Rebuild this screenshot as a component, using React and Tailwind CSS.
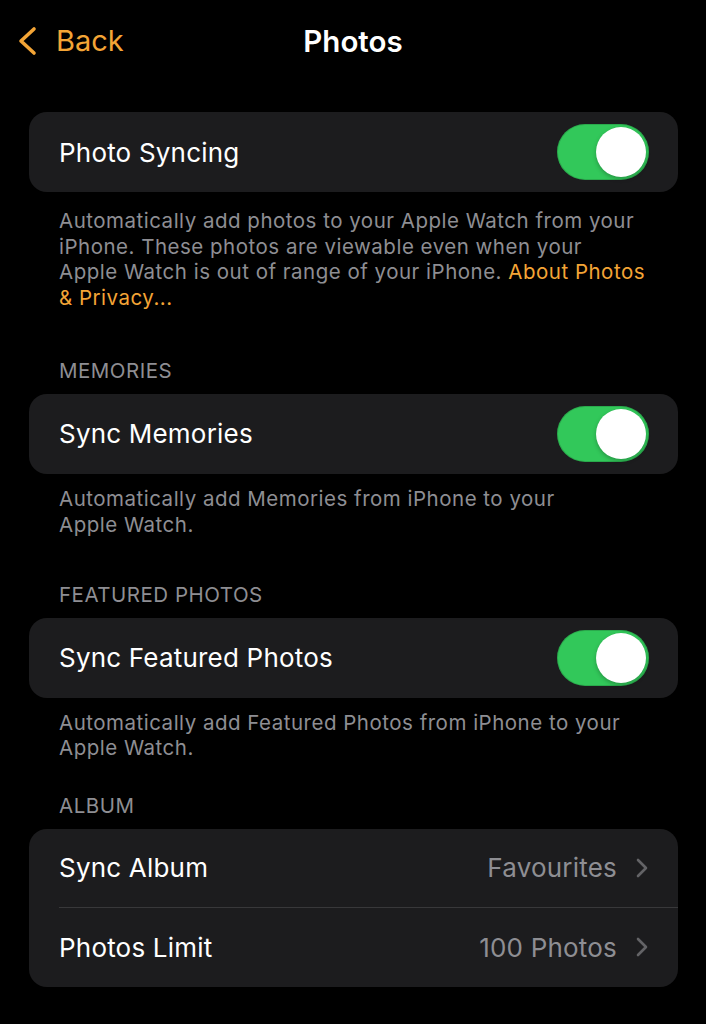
import React from "react";

const font = { fontFamily: "Inter, 'Noto Sans', sans-serif" };

function Toggle() {
  return (
    <div className="w-[92px] h-[56px] rounded-full bg-[#32c85a] flex items-center justify-end pr-[3px] shadow-[inset_0_0_0_1px_rgba(0,0,0,0.15)]">
      <div className="w-[50px] h-[50px] rounded-full bg-white shadow-[0_2px_4px_rgba(0,0,0,0.25)]" />
    </div>
  );
}

function Chevron() {
  return (
    <svg width="12" height="20" viewBox="0 0 12 20" className="ml-[19px]">
      <polyline points="2,2 10,10 2,18" fill="none" stroke="#636366" strokeWidth="2.6" strokeLinecap="round" strokeLinejoin="round" />
    </svg>
  );
}

function ToggleCard({ label }) {
  return (
    <div className="h-[80px] rounded-[18px] bg-[#1c1c1e] pl-[30px] pr-[29px] flex items-center justify-between">
      <span className="text-[26px] text-white tracking-[0.2px]">{label}</span>
      <Toggle />
    </div>
  );
}

function Desc({ children, className = "" }) {
  return (
    <div className={"px-[30px] text-[20.5px] leading-[25.6px] tracking-[0.5px] text-[#8e8e93] whitespace-nowrap " + className}>
      {children}
    </div>
  );
}

function Header({ children, className = "" }) {
  return (
    <div className={"px-[30px] text-[20.5px] leading-[25.6px] tracking-[0.5px] text-[#8e8e93] uppercase " + className}>
      {children}
    </div>
  );
}

export default function App() {
  return (
    <div className="min-h-[1024px] w-[706px] bg-black antialiased" style={font}>
      <div className="grid grid-cols-[1fr_auto_1fr] items-center pt-[21px] h-[61px] px-[17px]">
        <div className="flex items-center text-[#f4a536]">
          <svg width="20" height="30" viewBox="0 0 20 30">
            <polyline points="17,3 4,15 17,27" fill="none" stroke="#f4a536" strokeWidth="3.6" strokeLinecap="round" strokeLinejoin="round" />
          </svg>
          <span className="ml-[19px] text-[29px] leading-[40px]">Back</span>
        </div>
        <div className="text-[29.5px] leading-[40px] font-semibold text-white">Photos</div>
        <div />
      </div>

      <div className="pl-[29px] pr-[28px] mt-[51px]">
        <ToggleCard label="Photo Syncing" />
        <Desc className="mt-[16px]">
          Automatically add photos to your Apple Watch from your
          <br />
          iPhone. These photos are viewable even when your
          <br />
          Apple Watch is out of range of your iPhone.{" "}
          <span className="text-[#f4a536]">About Photos</span>
          <br />
          <span className="text-[#f4a536]">&amp; Privacy...</span>
        </Desc>

        <Header className="mt-[48px] mb-[10px]">Memories</Header>
        <ToggleCard label="Sync Memories" />
        <Desc className="mt-[12px]">
          Automatically add Memories from iPhone to your
          <br />
          Apple Watch.
        </Desc>

        <Header className="mt-[45px] mb-[10px]">Featured Photos</Header>
        <ToggleCard label="Sync Featured Photos" />
        <Desc className="mt-[12px]">
          Automatically add Featured Photos from iPhone to your
          <br />
          Apple Watch.
        </Desc>

        <Header className="mt-[32px] mb-[10px]">Album</Header>
        <div className="rounded-[18px] bg-[#1c1c1e] overflow-hidden">
          <div className="h-[78px] pl-[30px] pr-[30px] flex items-center justify-between">
            <span className="text-[26px] text-white tracking-[0.2px]">Sync Album</span>
            <div className="flex items-center">
              <span className="text-[26px] text-[#8e8e93] tracking-[0.2px]">Favourites</span>
              <Chevron />
            </div>
          </div>
          <div className="ml-[30px] h-px bg-[#38383a]" />
          <div className="h-[79px] pl-[30px] pr-[30px] flex items-center justify-between">
            <span className="text-[26px] text-white tracking-[0.2px]">Photos Limit</span>
            <div className="flex items-center">
              <span className="text-[26px] text-[#8e8e93] tracking-[0.2px]">100 Photos</span>
              <Chevron />
            </div>
          </div>
        </div>
      </div>
    </div>
  );
}
